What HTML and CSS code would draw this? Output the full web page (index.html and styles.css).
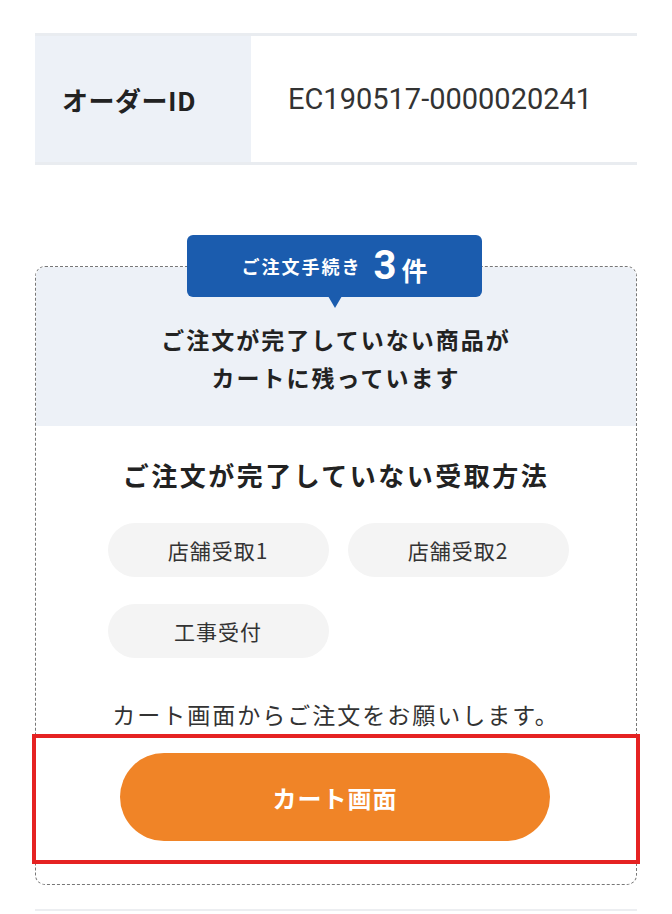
FILE: index.html
```html
<!DOCTYPE html>
<html lang="ja">

<head>
    <meta charset="UTF-8">
    <meta name="viewport" content="width=device-width, initial-scale=1.0">
    <title>ご注文手続き</title>
    <link rel="stylesheet" href="styles.css">
</head>

<body>
    <div class="page">
        <div class="order-row">
            <div class="order-label">オーダーID</div>
            <div class="order-value">EC190517-0000020241</div>
        </div>

        <div class="pending-box">
            <div class="badge">
                <span class="badge-text">ご注文手続き</span>
                <span class="badge-num">3</span>
                <span class="badge-unit">件</span>
            </div>
            <div class="pending-head">
                <p>ご注文が完了していない商品が<br>カートに残っています</p>
            </div>
            <div class="pending-body">
                <h3>ご注文が完了していない受取方法</h3>
                <div class="chips">
                    <div class="chip">店舗受取1</div>
                    <div class="chip">店舗受取2</div>
                    <div class="chip">工事受付</div>
                </div>
                <p class="note">カート画面からご注文をお願いします。</p>
                <div class="highlight">
                    <button class="cart-btn">カート画面</button>
                </div>
            </div>
        </div>

        <div class="bottom-line"></div>
    </div>
</body>

</html>
```

FILE: styles.css
```css
body {
    margin: 0;
    background-color: #fff;
    font-family: "Noto Sans CJK JP", "Noto Sans", sans-serif;
    color: #222;
}

.page {
    padding: 33px 35px 0;
}

.order-row {
    display: flex;
    height: 126px;
    border-top: 3px solid #e9ecf0;
    border-bottom: 3px solid #e9ecf0;
}

.order-label {
    width: 189px;
    padding-left: 27px;
    background-color: #edf1f7;
    display: flex;
    align-items: center;
    font-size: 26px;
    font-weight: bold;
    letter-spacing: 0.5px;
    color: #222;
}

.order-value {
    padding-left: 37px;
    display: flex;
    align-items: center;
    font-family: "Roboto", "Noto Sans CJK JP", sans-serif;
    font-size: 29px;
    color: #333;
}

.pending-box {
    position: relative;
    margin-top: 101px;
    border: 1px dashed #777;
    border-radius: 10px;
}

/* 吹き出しバッジ */
.badge {
    position: absolute;
    top: -32px;
    left: 151px;
    width: 295px;
    height: 62px;
    background-color: #1b5cae;
    border-radius: 6px;
    color: #fff;
    display: flex;
    align-items: center;
    justify-content: center;
    font-weight: bold;
}

.badge::after {
    content: "";
    position: absolute;
    left: 141px;
    bottom: -11px;
    border-left: 7px solid transparent;
    border-right: 7px solid transparent;
    border-top: 12px solid #1b5cae;
}

.badge-text {
    font-size: 18px;
    letter-spacing: 2px;
}

.badge-num {
    font-family: "Roboto", sans-serif;
    font-size: 40px;
    line-height: 1;
    margin: 0 5px 0 12px;
}

.badge-unit {
    font-size: 26px;
    margin-top: 6px;
}

.pending-head {
    background-color: #edf1f7;
    border-radius: 9px 9px 0 0;
    padding: 53px 0 30px;
    text-align: center;
}

.pending-head p {
    margin: 0;
    font-size: 23px;
    font-weight: bold;
    letter-spacing: 2px;
    line-height: 38px;
}

.pending-body {
    padding: 33px 0 20px;
    text-align: center;
}

.pending-body h3 {
    margin: 0;
    font-size: 26px;
    letter-spacing: 2.5px;
    line-height: 32px;
}

.chips {
    width: 461px;
    margin: 32px auto 0;
    display: grid;
    grid-template-columns: 221px 221px;
    column-gap: 19px;
    row-gap: 27px;
    position: relative;
    left: 2px;
}

.chip {
    height: 54px;
    border-radius: 27px;
    background-color: #f4f4f4;
    display: flex;
    align-items: center;
    justify-content: center;
    font-size: 21px;
    letter-spacing: 1px;
    color: #333;
}

.note {
    margin: 41px 0 5px;
    font-size: 23px;
    letter-spacing: 2px;
    line-height: 30px;
    color: #333;
}

.highlight {
    margin: 0 -4px;
    border: 4px solid #e52222;
    padding: 15px 0 19px;
}

.cart-btn {
    display: block;
    width: 430px;
    height: 88px;
    margin: 0 0 0 84px;
    border: none;
    border-radius: 44px;
    background-color: #f08427;
    color: #fff;
    font-family: "Noto Sans CJK JP", sans-serif;
    font-size: 24px;
    font-weight: bold;
    letter-spacing: 1px;
    cursor: pointer;
}

.bottom-line {
    margin-top: 24px;
    height: 2px;
    background-color: #eceef1;
}
```
